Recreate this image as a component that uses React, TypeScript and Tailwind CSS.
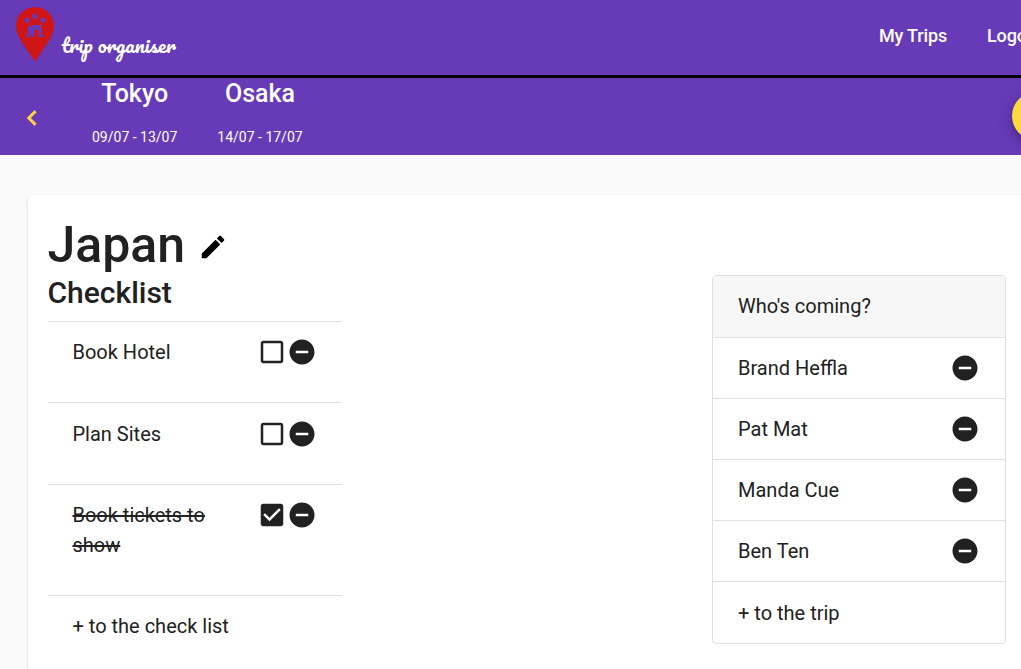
import React from 'react';

function Icon({ d, className }: { d: string; className: string }) {
  return (
    <svg viewBox="0 0 24 24" fill="currentColor" className={`block shrink-0 ${className}`}>
      <path d={d} />
    </svg>
  );
}

const REMOVE = 'M12 2C6.48 2 2 6.48 2 12s4.48 10 10 10 10-4.48 10-10S17.52 2 12 2zm5 11H7v-2h10v2z';
const BOX = 'M19 5v14H5V5h14m0-2H5c-1.1 0-2 .9-2 2v14c0 1.1.9 2 2 2h14c1.1 0 2-.9 2-2V5c0-1.1-.9-2-2-2z';
const CHECKED = 'M19 3H5c-1.11 0-2 .9-2 2v14c0 1.1.89 2 2 2h14c1.11 0 2-.9 2-2V5c0-1.1-.89-2-2-2zm-9 14l-5-5 1.41-1.41L10 14.17l7.59-7.59L19 8l-9 9z';
const PENCIL = 'M3 17.25V21h3.75L17.81 9.94l-3.75-3.75L3 17.25zM20.71 7.04c.39-.39.39-1.02 0-1.41l-2.34-2.34c-.39-.39-1.02-.39-1.41 0l-1.83 1.83 3.75 3.75 1.83-1.83z';
const CHEVRON = 'M15.41 7.41L14 6l-6 6 6 6 1.41-1.41L10.83 12z';
const STAR = 'M0-3L2.9-.9 1.8 2.5H-1.8L-2.9-.9z';

function Logo() {
  return (
    <div className="flex items-start pl-4 pt-[7px]">
      <svg viewBox="0 0 38 55" className="block h-[55px] w-[38px]">
        <path d="M19 0C8.500 0 0 8.300 0 18.600c0 5.500 2 10 5.500 16L19 54.500l13.500-19.900C36 28.600 38 24.100 38 18.600 38 8.300 29.500 0 19 0z" fill="#cf1515" />
        <g fill="#673ab7">
          <path d={STAR} transform="translate(11 13.300)" />
          <path d={STAR} transform="translate(18.800 9.400)" />
          <path d={STAR} transform="translate(26.800 13.300)" />
          <path d="M12 19.300h3.500v-1.200h10V28.500h2.300v1.600h-5.300v-5.200c0-2.800-4.200-2.800-4.200 0v5.200h-2.800V25l-1.500 5.100h-3.800v-1.600h1z" />
        </g>
      </svg>
      <span className="ml-[7.500px] mt-[22px] whitespace-nowrap font-['Pacifico',cursive] text-[20px] leading-8 text-white">
        trip organiser
      </span>
    </div>
  );
}

function Stop({ name, dates }: { name: string; dates: string }) {
  return (
    <div className="flex flex-col items-center whitespace-nowrap pt-px text-white">
      <h2 className="text-[25px] font-medium leading-[30px]">{name}</h2>
      <span className="mt-[18px] text-sm leading-5">{dates}</span>
    </div>
  );
}

const tasks = [
  { label: 'Book Hotel', done: false, size: 'h-[81px] pt-[15px]' },
  { label: 'Plan Sites', done: false, size: 'h-[82px] pt-4' },
  { label: 'Book tickets to show', done: true, size: 'h-[111px] pt-[15px]' },
];

const people = ['Brand Heffla', 'Pat Mat', 'Manda Cue', 'Ben Ten'];

export default function App() {
  return (
    <div className="h-[669px] w-full overflow-hidden bg-[#fafafa] font-['Roboto',sans-serif] text-[#212121]">
      <header className="flex h-[78px] justify-between border-b-[3px] border-black bg-[#673ab7]">
        <Logo />
        <nav className="-mr-7 flex gap-10 pt-6 text-lg font-medium leading-6 tracking-[-0.15px] text-white">
          <a>My Trips</a>
          <a className="w-[62px]">Logout</a>
        </nav>
      </header>

      <div className="flex h-[77px] justify-between overflow-hidden bg-[#673ab7]">
        <div className="flex">
          <div className="ml-[17px] mt-[25px] text-[#ffd740]">
            <Icon d={CHEVRON} className="size-[30px] stroke-current stroke-[0.5px]" />
          </div>
          <div className="ml-[45px] flex gap-10">
            <Stop name="Tokyo" dates="09/07 - 13/07" />
            <Stop name="Osaka" dates="14/07 - 17/07" />
          </div>
        </div>
        <button className="-mr-[39px] mt-[14px] size-12 shrink-0 rounded-full bg-[#ffd740] shadow-[0_3px_5px_-1px_rgba(0,0,0,.2),0_6px_10px_0_rgba(0,0,0,.14),0_1px_18px_0_rgba(0,0,0,.12)]" />
      </div>

      <main className="-mr-5 ml-7 mt-10 flex h-[500px] justify-between rounded bg-white pl-5 pr-[35px] shadow-[0_2px_1px_-1px_rgba(0,0,0,.2),0_1px_1px_0_rgba(0,0,0,.14),0_1px_3px_0_rgba(0,0,0,.12)]">
        <section className="w-[294px]">
          <div className="flex pt-5">
            <h1 className="-ml-[0.5px] text-[50px] font-medium leading-[60px]">Japan</h1>
            <Icon d={PENCIL} className="ml-[12.5px] mt-[17px] size-[30px] text-black" />
          </div>
          <h2 className="-ml-[0.5px] text-[30px] font-medium leading-9">Checklist</h2>
          <ul className="mt-[10px] text-xl leading-[30px]">
            {tasks.map((t) => (
              <li key={t.label} className={`flex items-start border-t border-[#dfdfdf] pl-[24.5px] ${t.size}`}>
                <span className={`w-[184.5px] pr-6 ${t.done ? 'line-through' : ''}`}>{t.label}</span>
                <Icon d={t.done ? CHECKED : BOX} className="size-[30px]" />
                <Icon d={REMOVE} className="size-[30px]" />
              </li>
            ))}
            <li className="border-t border-[#dfdfdf] pl-[24.5px] pt-[15px]">+ to the check list</li>
          </ul>
        </section>

        <section className="mt-20 h-[369px] w-[294px] overflow-hidden rounded border border-[#dfdfdf] text-xl leading-[30px]">
          <h3 className="h-[62px] border-b border-[#dfdfdf] bg-[#f7f7f7] pl-[25px] pt-[15px]">Who's coming?</h3>
          <ul>
            {people.map((p) => (
              <li key={p} className="flex h-[61px] justify-between border-b border-[#dfdfdf] px-[25px] pt-[15px]">
                <span>{p}</span>
                <Icon d={REMOVE} className="size-[30px]" />
              </li>
            ))}
            <li className="pl-[25px] pt-4">+ to the trip</li>
          </ul>
        </section>
      </main>
    </div>
  );
}
